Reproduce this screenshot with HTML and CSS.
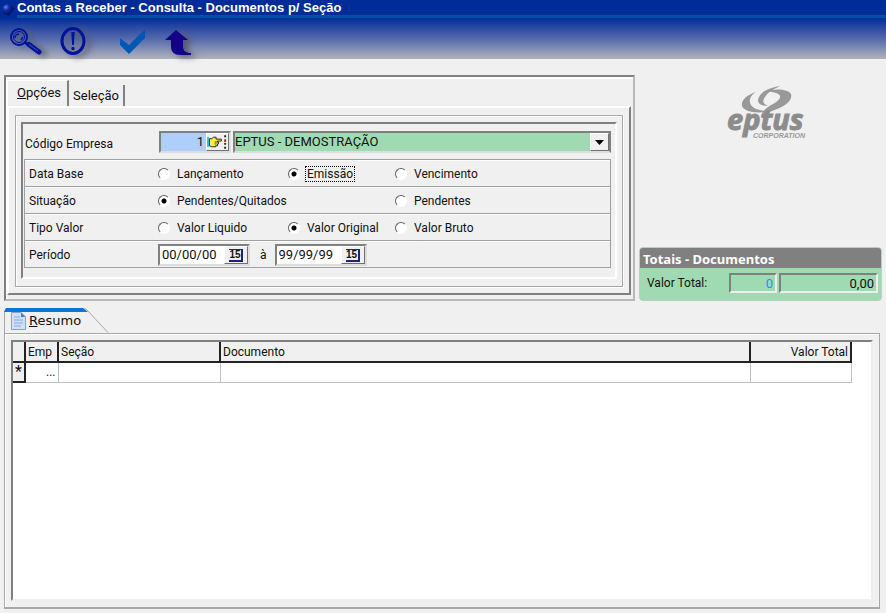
FILE: index.html
```html
<!DOCTYPE html>
<html lang="pt-BR">
<head>
<meta charset="utf-8">
<title>Contas a Receber - Consulta - Documentos p/ Seção</title>
<link rel="stylesheet" href="styles.css">
</head>
<body>
<header class="top">
  <div class="titlebar">
    <svg class="orb" width="16" height="16" viewBox="0 0 16 16" aria-hidden="true"><defs><radialGradient id="orb" cx=".3" cy=".35" r=".7"><stop offset="0" stop-color="#5d86e8"/><stop offset=".35" stop-color="#1030a8"/><stop offset="1" stop-color="#000a50"/></radialGradient></defs><path d="M2 8 8 2.500 14.500 8.500 9 15.500 4 14Z" fill="url(#orb)"/></svg>
    <h1>Contas a Receber - Consulta - Documentos p/ Seção</h1>
  </div>
  <nav class="toolbar" aria-label="Ferramentas">
    <button type="button" aria-label="Pesquisar"><svg width="40" height="32" viewBox="0 0 40 32"><g fill="none" stroke="#00139a"><circle cx="11" cy="10" r="8" stroke-width="2"/><circle cx="11" cy="10" r="5.500" stroke-width="1"/><path d="M7 11a4 4 0 0 1 4-4M13 13l2-3" stroke-width="1.500"/><path d="M16 15l5 3" stroke-width="3"/><path d="M21 17.500 31 25" stroke-width="5" stroke-linecap="round"/></g><path d="M21 17.500 30 24" stroke="#3a58c8" stroke-width="1"/></svg></button>
    <button type="button" aria-label="Informação"><svg width="40" height="32" viewBox="0 0 40 32"><ellipse cx="17" cy="14" rx="11" ry="12.500" fill="none" stroke="#00139a" stroke-width="3"/><path d="M15.300 5h3.400l-.8 13h-1.800z" fill="#00139a"/><circle cx="17" cy="21.500" r="1.700" fill="#00139a"/></svg></button>
    <button type="button" class="flat gap" aria-label="Confirmar"><svg width="40" height="32" viewBox="0 0 40 32"><path d="M5 11 14 18 30 2V11L14 27 5 18Z" fill="#0058b4"/></svg></button>
    <button type="button" aria-label="Voltar"><svg width="40" height="32" viewBox="0 0 40 32"><path d="M2 13 13 3 25 13H20V19C20 24 23 26 28 26V28H18C11 28 8 25 8 19V13Z" fill="#150089"/></svg></button>
  </nav>
</header>

<main>
  <div class="upper">
    <section class="options">
      <div class="tabs" role="tablist">
        <button type="button" class="tab active" role="tab" aria-selected="true"><u>O</u>pções</button>
        <button type="button" class="tab" role="tab" aria-selected="false">Seleção</button>
      </div>
      <div class="page">
        <div class="group">
          <form class="sunken">
            <div class="company">
              <label for="empresa">Código Empresa</label>
              <div class="field code">
                <input id="empresa" type="text" value="1">
                <button type="button" aria-label="Procurar empresa"><svg width="22" height="16" viewBox="0 0 22 16"><path d="M0 3h2v10H0z" fill="#00d8e8"/><path d="M2.500 4.500H5L7 3H9.500V5H15V7H11V8H12V10H11V12H9V13H5L2.500 12Z" fill="#ffee40" stroke="#222"/><path d="M8 8h3M8 10h2" stroke="#333"/><path d="M18 1h2v2h-2zM18 9h2v2h-2zM18 13h2v2h-2z" fill="#222"/><path d="M18 5h2v3h-2z" fill="#e01010"/></svg></button>
              </div>
              <div class="field combo">
                <select aria-label="Nome da empresa"><option>EPTUS - DEMOSTRAÇÃO</option></select>
                <span class="drop" aria-hidden="true"><svg width="9" height="5" viewBox="0 0 9 5"><path d="M0 0h9L4.500 5Z"/></svg></span>
              </div>
            </div>
            <div class="rows">
              <div class="row" role="radiogroup" aria-label="Data Base">
                <span>Data Base</span>
                <label><input type="radio" name="data"><span>Lançamento</span></label>
                <label><input type="radio" name="data" checked><span class="focus">Emissão</span></label>
                <label><input type="radio" name="data"><span>Vencimento</span></label>
              </div>
              <div class="row" role="radiogroup" aria-label="Situação">
                <span>Situação</span>
                <label class="wide"><input type="radio" name="sit" checked><span>Pendentes/Quitados</span></label>
                <label><input type="radio" name="sit"><span>Pendentes</span></label>
              </div>
              <div class="row" role="radiogroup" aria-label="Tipo Valor">
                <span>Tipo Valor</span>
                <label><input type="radio" name="tipo"><span>Valor Liquido</span></label>
                <label><input type="radio" name="tipo" checked><span>Valor Original</span></label>
                <label><input type="radio" name="tipo"><span>Valor Bruto</span></label>
              </div>
              <div class="row">
                <label for="de">Período</label>
                <div class="period">
                  <div class="field date"><input id="de" type="text" value="00/00/00"><button type="button" aria-label="Calendário inicial"><span>15</span></button></div>
                  <label for="ate">à</label>
                  <div class="field date"><input id="ate" type="text" value="99/99/99"><button type="button" aria-label="Calendário final"><span>15</span></button></div>
                </div>
              </div>
            </div>
          </form>
        </div>
      </div>
    </section>

    <aside>
      <svg class="logo" width="90" height="60" viewBox="0 0 90 60" role="img" aria-label="eptus corporation">
        <g fill="#999">
          <path d="M54 2C41 4 33 9 32 16C32 21 38 22 42 22C37 20 36 17 39 13C42 8 48 5 54 2Z"/>
          <path d="M30 8C21 11 15 16 16 22C18 28 32 30 44 27C37 27 28 26 25 21C22 16 25 11 30 8Z"/>
          <path d="M37 8C49 4 62 5 65 10C67 17 58 23 46 27C41 29 37 30 35 34C35 29 38 26 42 23C49 19 55 16 54 12C53 9 46 7 37 8Z"/>
        </g>
        <text class="brand" x="1" y="46">eptus</text>
        <text class="corp" x="27" y="54">CORPORATION</text>
      </svg>
      <section class="totals">
        <h2>Totais - Documentos</h2>
        <div class="sum">
          <label for="qtd">Valor Total:</label>
          <input id="qtd" class="count" type="text" value="0" readonly>
          <input class="amount" type="text" value="0,00" aria-label="Valor total" readonly>
        </div>
      </section>
    </aside>
  </div>

  <section class="summary">
    <div class="sheet-tab">
      <svg class="edge" width="106" height="25" viewBox="0 0 106 25" aria-hidden="true"><path d="M.5 25V3L3 1H82L104 24.500" fill="#f0f0f0" stroke="#a8a8a8"/><path d="M0 4 2 0H79L84 4Z" fill="#0a74d8"/></svg>
      <button type="button"><svg width="15" height="18" viewBox="0 0 15 18" aria-hidden="true"><path d="M.5.500H10L14.500 5V17.500H.5Z" fill="#cfe2fa" stroke="#7aa5dc"/><path d="M10 .5V5h4.500Z" fill="#3f82d0"/><path d="M3 5h6M3 8h9M3 11h9M3 14h7" stroke="#7fa8dc"/></svg><span><u>R</u>esumo</span></button>
    </div>
    <div class="sheet">
      <div class="grid">
        <table>
          <colgroup><col class="c-mark"><col class="c-emp"><col class="c-sec"><col><col class="c-val"></colgroup>
          <thead><tr><th></th><th>Emp</th><th>Seção</th><th>Documento</th><th class="num">Valor Total</th></tr></thead>
          <tbody><tr><th class="mark">*</th><td class="num">...</td><td></td><td></td><td></td></tr></tbody>
        </table>
      </div>
    </div>
  </section>
</main>
</body>
</html>
```
FILE: styles.css
```css
* { box-sizing: border-box; }
body {
  margin: 0;
  min-height: 100vh;
  display: flex;
  flex-direction: column;
  background: #f0f0f0;
  color: #111;
  font: 12px/16px Roboto, "Liberation Sans", sans-serif;
}
h1, h2 { margin: 0; }
input, select, button { font: inherit; color: inherit; margin: 0; border-radius: 0; }
button { padding: 0; }

.top { background: linear-gradient(#002c98 0, #002c98 18px, #1c3fa0 24px, #5a6eae 40px, #b0b2ba 59px); height: 59px; }
.titlebar { display: flex; height: 18px; }
.titlebar h1 {
  flex: 1;
  height: 18px;
  border-bottom: 3px solid #0050a8;
  color: #fff;
  font: bold 13px/16px "Liberation Sans", sans-serif;
}
.orb { margin-right: 1px; }
.toolbar { display: flex; gap: 7px; padding: 8px 8px 0; }
.toolbar button { width: 41px; height: 33px; border: 0; background: none; }
.toolbar svg { display: block; filter: drop-shadow(5px 2px 3px #55586c); }
.toolbar .flat svg { filter: none; }
.toolbar .gap { margin-left: 11px; }

main { flex: 1; display: flex; flex-direction: column; padding: 16px 4px 4px; }
.upper { display: flex; gap: 4px; }
.options {
  flex: 1;
  padding: 3px 2px 4px 1px;
  border: 2px solid;
  border-color: #808080 #b8b8b8 #b8b8b8 #808080;
  box-shadow: inset 2px 2px #fff;
}
.tabs { display: flex; align-items: flex-end; height: 26px; padding-left: 1px; }
.tab { height: 21px; padding: 0 4px; border: 0; border-right: 2px solid #808080; background: #f0f0f0; font-size: 13px; }
.tab.active { height: 26px; padding: 0 6px 2px 9px; border-top: 1px solid #fff; }
.page {
  padding: 7px 6px 6px;
  border: 2px solid;
  border-color: #fff #808080 #808080 #fff;
}
.group { padding: 6px 5px 7px; border: 1px solid #a8a8a8; box-shadow: inset 1px 1px #fff, 1px 1px #fff; }
.sunken {
  padding: 7px 4px 9px 1px;
  border: 2px solid;
  border-color: #808080 #fff #fff #808080;
}
.company { display: flex; align-items: center; gap: 2px; margin-bottom: 6px; }
.company > label { width: 133px; padding: 3px 0 0 1px; }
.field {
  display: flex;
  height: 22px;
  border: 2px solid;
  border-color: #808080 #ddd #ddd #808080;
  background: #fff;
  font-size: 13px;
}
.field input { min-width: 0; flex: 1; border: 0; padding: 0 2px; background: none; }
.field button, .drop {
  display: flex;
  align-items: center;
  justify-content: center;
  border: 1px solid;
  border-color: #fff #707070 #707070 #fff;
  background: #f0f0f0;
}
.code { width: 72px; background: #aecffa; }
.code input { text-align: right; }
.code button { width: 23px; }
.combo { flex: 1; position: relative; background: #9fdab3; border-right-color: #808080; }
.combo select { width: 100%; padding: 0 20px 0 0; border: 0; background: none; appearance: none; outline: 0; }
.drop { position: absolute; right: 0; top: 0; bottom: 0; width: 19px; pointer-events: none; }

.rows { border: 1px solid #a0a0a0; border-bottom: 0; }
.row {
  display: grid;
  grid-template-columns: 129px 130px 107px 1fr;
  align-items: center;
  height: 27px;
  padding: 2px 0 0 4px;
  border-bottom: 1px solid #a0a0a0;
  box-shadow: inset 0 1px #fff;
}
.row label { display: flex; align-items: center; }
.row .wide { grid-column: span 2; }
.row input[type="radio"] {
  appearance: none;
  width: 12px;
  height: 12px;
  margin-right: 6px;
  border: 1px solid;
  border-color: #606060 #fff #fff #606060;
  border-radius: 50%;
  background: #fff;
}
.row input[type="radio"]:checked { background: radial-gradient(circle, #000 2px, #fff 3px); }
.row label input + span { padding: 0 1px; }
.row .focus { outline: 1px dotted #000; line-height: 14px; }
.period { grid-column: span 3; display: flex; align-items: center; }
.period > label { padding: 0 8px 0 10px; }
.date { width: 92px; }
.date button { width: 24px; }
.date button span {
  width: 14px;
  border: solid #202080;
  border-width: 1px 2px 2px 0;
  font: bold 10px/10px "Liberation Sans", sans-serif;
}

aside { width: 243px; display: flex; flex-direction: column; justify-content: space-between; }
.logo { display: block; margin: 9px 0 0 87px; }
.brand { font: italic bold 29px "Open Sans", sans-serif; fill: #8c8c8c; stroke: #8c8c8c; }
.corp { font: italic bold 7px "Liberation Sans", sans-serif; fill: #999; stroke: #f0f0f0; stroke-width: 2px; paint-order: stroke; }
.totals { border: 1px solid #b8ccc0; border-radius: 4px; overflow: hidden; background: #9fdab3; }
.totals h2 {
  padding: 3px 3px 1px;
  background: #808080;
  color: #fff;
  font: bold 13px/16px "Noto Sans", sans-serif;
}
.sum { display: flex; align-items: center; gap: 2px; padding: 5px 3px 7px 7px; }
.sum label { width: 80px; }
.sum input {
  height: 20px;
  min-width: 0;
  padding: 0 2px;
  border: 2px solid;
  border-color: #808080 #eee #eee #808080;
  background: none;
  font-size: 13px;
  text-align: right;
}
.count { width: 48px; }
.sum .count { color: #1e90ff; }
.amount { flex: 1; }

.summary { flex: 1; display: flex; flex-direction: column; padding: 7px 2px 0 0; }
.sheet-tab { position: relative; height: 25px; }
.edge { position: absolute; left: 0; top: 0; z-index: 1; }
.sheet-tab button {
  position: relative;
  z-index: 2;
  display: flex;
  align-items: center;
  gap: 3px;
  margin-left: 7px;
  padding-top: 4px;
  border: 0;
  background: none;
  font: 13px/16px "DejaVu Sans", sans-serif;
}
.sheet {
  flex: 1;
  display: flex;
  padding: 6px;
  border: 1px solid #a8a8a8;
  border-bottom-width: 2px;
  box-shadow: inset 1px 1px #fff;
}
.grid {
  flex: 1;
  min-height: 250px;
  padding-right: 19px;
  border: 2px solid;
  border-color: #808080 #eee #eee #808080;
  background: #fff;
}
table { width: 100%; table-layout: fixed; border-collapse: collapse; }
.c-mark { width: 12px; }
.c-emp { width: 33px; }
.c-sec { width: 162px; }
.c-val { width: 101px; }
th, td { height: 20px; padding: 0 2px; border-right: 1px solid #c0c0c0; border-bottom: 1px solid #c0c0c0; text-align: left; font-weight: normal; white-space: nowrap; }
th { background: #f0f0f0; border-right: 2px solid #222; border-bottom: 2px solid #222; }
.mark { font-size: 16px; }
.num { text-align: right; }
```
